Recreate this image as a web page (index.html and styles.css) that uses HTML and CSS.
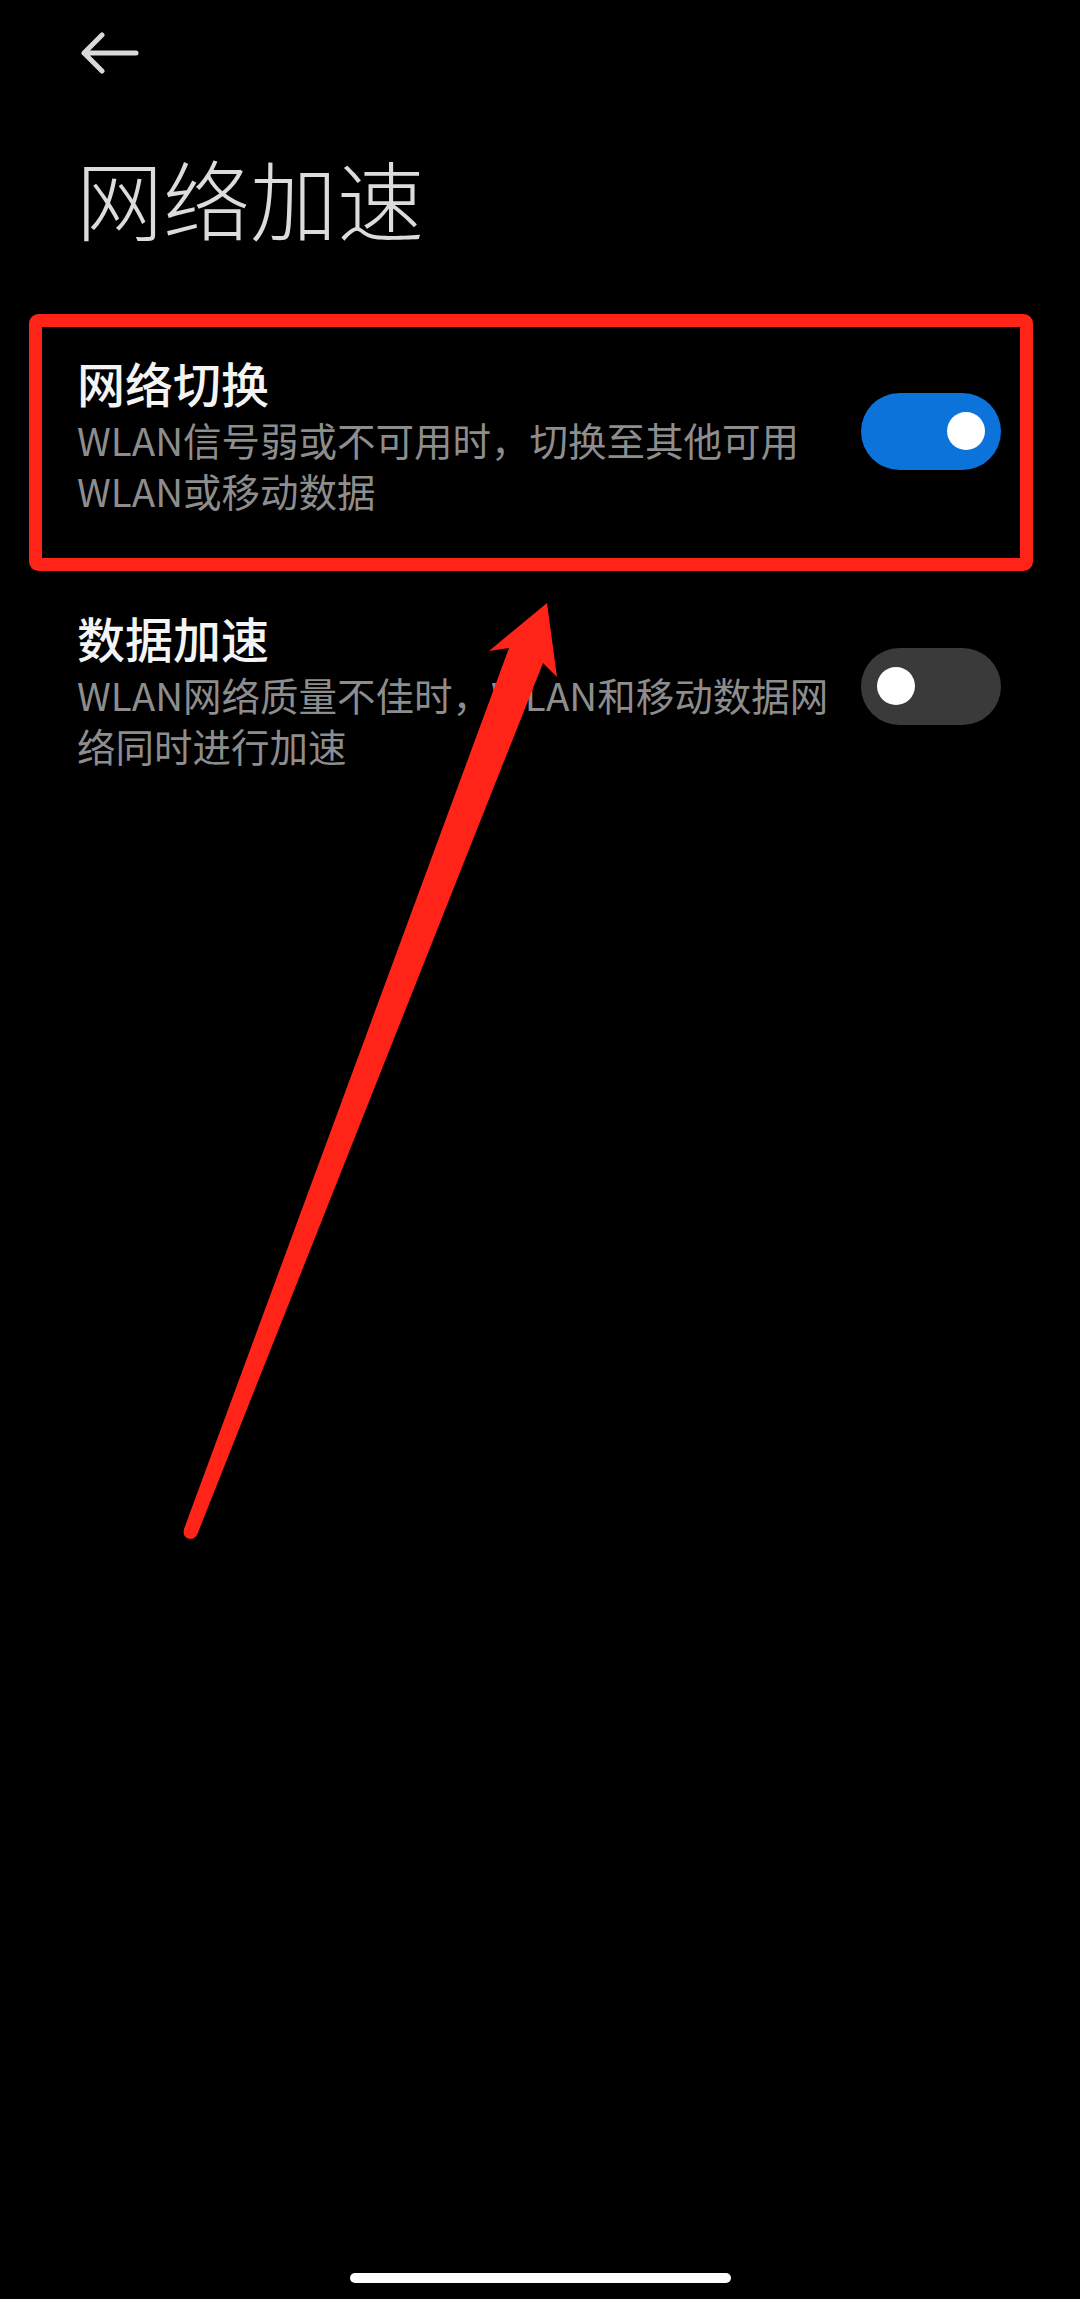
FILE: index.html
```html
<!DOCTYPE html>
<html lang="zh-CN">
<head>
<meta charset="utf-8">
<title>网络加速</title>
<link rel="stylesheet" href="styles.css">
</head>
<body>
<div class="page">
  <header class="topbar">
    <svg class="back" width="58" height="42" viewBox="0 0 58 42" aria-label="返回">
      <path d="M3 21 H55 M21 3 L3 21 L21 39" fill="none" stroke="#d9d9d9" stroke-width="5" stroke-linecap="round" stroke-linejoin="round"/>
    </svg>
  </header>
  <h1 class="title">网络加速</h1>

  <section class="list">
    <div class="item">
      <div class="text">
        <div class="item-title">网络切换</div>
        <div class="item-sub">
          <span class="line">WLAN信号弱或不可用时，切换至其他可用</span>
          <span class="line">WLAN或移动数据</span>
        </div>
      </div>
      <div class="toggle on"><span class="knob"></span></div>
    </div>
    <div class="item">
      <div class="text">
        <div class="item-title">数据加速</div>
        <div class="item-sub">
          <span class="line">WLAN网络质量不佳时，WLAN和移动数据网</span>
          <span class="line">络同时进行加速</span>
        </div>
      </div>
      <div class="toggle off"><span class="knob"></span></div>
    </div>
  </section>

  <div class="home-bar"></div>

  <svg class="annotation" width="1080" height="2299" viewBox="0 0 1080 2299">
    <rect x="35.5" y="320.5" width="991" height="244" rx="3" fill="none" stroke="#ff2417" stroke-width="13" stroke-linejoin="round"/>
    <polygon fill="#ff2417" points="547,603 557,677 543,663 197,1535 184,1529 509,648 489,651"/>
    <circle cx="190.5" cy="1532" r="7" fill="#ff2417"/>
  </svg>
</div>
</body>
</html>
```

FILE: styles.css
```css
* { box-sizing: border-box; }

html, body {
  margin: 0;
  padding: 0;
  background: #000;
}

body {
  font-family: "Noto Sans CJK SC", "Noto Sans", sans-serif;
  color: #f2f2f2;
}

.page {
  position: relative;
  width: 1080px;
  height: 2299px;
  display: flex;
  flex-direction: column;
  overflow: hidden;
}

.topbar {
  height: 106px;
  display: flex;
  align-items: center;
  padding-left: 81px;
}

.back { display: block; }

.title {
  margin: 41px 0 0 0;
  padding-left: 76px;
  font-size: 87px;
  line-height: 100px;
  font-weight: 300;
  color: #dcdcdc;
}

.list {
  display: flex;
  flex-direction: column;
  margin-top: 61px;
}

.item {
  display: flex;
  align-items: center;
  padding: 46px 79px 47px 77px;
}

.text {
  flex: 1;
  min-width: 0;
}

.item-title {
  font-size: 48px;
  line-height: 56px;
  font-weight: 500;
  color: #f4f4f4;
}

.item-sub {
  margin-top: 4px;
  font-size: 38.5px;
  line-height: 51px;
  color: #8d8d8d;
}

.line {
  display: block;
  white-space: nowrap;
}

.toggle {
  position: relative;
  width: 140px;
  height: 77px;
  border-radius: 39px;
  flex: none;
  margin-bottom: 8px;
}

.toggle.on { background: #0b73d9; }
.toggle.off { background: #3a3a3a; }

.knob {
  position: absolute;
  top: 19.5px;
  width: 38px;
  height: 38px;
  border-radius: 50%;
  background: #fff;
}

.toggle.on .knob { right: 16px; }
.toggle.off .knob { left: 16px; }

.home-bar {
  margin: auto auto 16px auto;
  width: 381px;
  height: 10px;
  border-radius: 5px;
  background: #fff;
}

.annotation {
  position: absolute;
  left: 0;
  top: 0;
  pointer-events: none;
}
```
